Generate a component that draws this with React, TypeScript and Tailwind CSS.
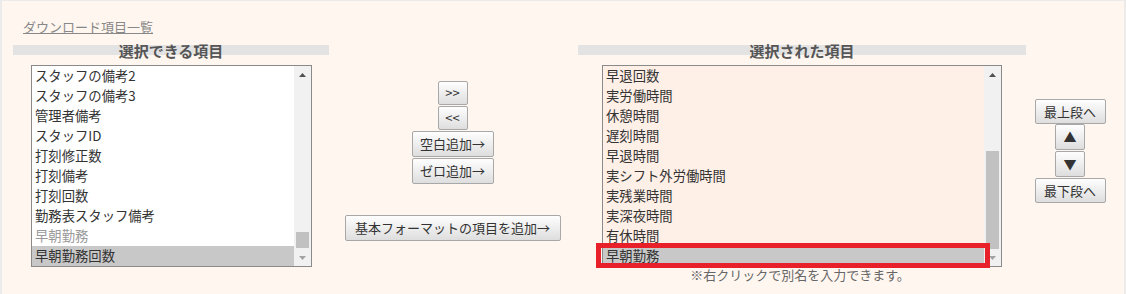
import React from "react";

type Item = { t: string; disabled?: boolean; selected?: boolean };

const leftItems: Item[] = [
  { t: "スタッフの備考2" },
  { t: "スタッフの備考3" },
  { t: "管理者備考" },
  { t: "スタッフID" },
  { t: "打刻修正数" },
  { t: "打刻備考" },
  { t: "打刻回数" },
  { t: "勤務表スタッフ備考" },
  { t: "早朝勤務", disabled: true },
  { t: "早朝勤務回数", selected: true },
];

const rightItems: Item[] = [
  { t: "早退回数" },
  { t: "実労働時間" },
  { t: "休憩時間" },
  { t: "遅刻時間" },
  { t: "早退時間" },
  { t: "実シフト外労働時間" },
  { t: "実残業時間" },
  { t: "実深夜時間" },
  { t: "有休時間" },
  { t: "早朝勤務", selected: true },
];

function Tri({ up, color }: { up: boolean; color: string }) {
  return (
    <svg width="7" height="4" viewBox="0 0 7 4">
      {up ? <polygon points="0,4 7,4 3.5,0" fill={color} /> : <polygon points="0,0 7,0 3.5,4" fill={color} />}
    </svg>
  );
}

function Scrollbar({ big }: { big: boolean }) {
  return (
    <div className="w-[17px] bg-[#f1f1f1] flex flex-col shrink-0">
      <div className="h-[17px] flex items-center justify-center">
        <Tri up color="#505050" />
      </div>
      <div className={"flex-1 flex flex-col justify-end " + (big ? "" : "pb-[1px]")}>
        <div className={"mx-[2px] bg-[#c1c1c1] " + (big ? "h-[98px]" : "h-[16px]")} />
      </div>
      <div className="h-[17px] flex items-center justify-center">
        <Tri up={false} color="#a3a3a3" />
      </div>
    </div>
  );
}

function ListRow({ item }: { item: Item }) {
  return (
    <div
      className={
        "h-[20px] leading-[20px] pl-[3px] whitespace-nowrap " +
        (item.selected ? "bg-[#c8c8c8] text-[#333]" : item.disabled ? "text-[#9a9a9a]" : "text-[#333]")
      }
    >
      {item.t}
    </div>
  );
}

function Btn({ children, cls }: { children: React.ReactNode; cls: string }) {
  return (
    <div
      className={
        "flex items-center justify-center border border-[#a8a8a8] rounded-[2px] bg-gradient-to-b from-[#fefefe] to-[#dedede] text-[#333] text-[13px] whitespace-nowrap " +
        cls
      }
    >
      {children}
    </div>
  );
}

function Header({ label }: { label: string }) {
  return (
    <div className="h-[10px] bg-[#e3e3e3] flex items-center justify-center">
      <span className="text-[15px] leading-[15px] font-bold text-[#555]">{label}</span>
    </div>
  );
}

export default function App() {
  return (
    <div className="w-[1126px] h-[294px] bg-[#ebebeb] pt-[1px] pl-[2px] pr-[2px] font-['Noto_Sans_CJK_JP',sans-serif] overflow-hidden">
      <div className="h-full bg-[#fff6f0]">
        <div className="pt-[12px] pl-[21px] h-[44px]">
          <span className="text-[13px] leading-[19px] text-[#888] underline">ダウンロード項目一覧</span>
        </div>
        <div className="flex pl-[11px]">
          {/* column 1 */}
          <div className="w-[316px] shrink-0">
            <Header label="選択できる項目" />
            <div className="mt-[10px] ml-[18px] w-[281px] h-[202px] border border-[#8a8a8a] bg-white flex text-[13.33px]">
              <div className="flex-1 overflow-hidden">
                {leftItems.map((it, i) => (
                  <ListRow key={i} item={it} />
                ))}
              </div>
              <Scrollbar big={false} />
            </div>
          </div>
          {/* column 2 */}
          <div className="w-[249px] shrink-0 pr-[2px] pt-[36px] flex flex-col items-center">
            <Btn cls="w-[30px] h-[24px] text-[12px]">&gt;&gt;</Btn>
            <Btn cls="w-[30px] h-[24px] mt-[1px] text-[12px]">&lt;&lt;</Btn>
            <Btn cls="w-[82px] h-[26px] mt-[1px]">空白追加→</Btn>
            <Btn cls="w-[82px] h-[26px] mt-[1px]">ゼロ追加→</Btn>
            <Btn cls="w-[216px] h-[26px] mt-[31px]">基本フォーマットの項目を追加→</Btn>
          </div>
          {/* column 3 */}
          <div className="w-[448px] shrink-0">
            <Header label="選択された項目" />
            <div className="mt-[10px] ml-[24px] w-[400px]">
              <div className="relative h-[202px] border border-[#8a8a8a] bg-[#fff0e7] flex text-[13.33px]">
                <div className="flex-1 overflow-hidden">
                  {rightItems.map((it, i) => (
                    <ListRow key={i} item={it} />
                  ))}
                </div>
                <Scrollbar big />
                <div className="absolute left-[-7px] top-[177px] w-[394px] h-[25px] border-[5px] border-[#e8202a]" />
              </div>
              <div className="text-center text-[13px] leading-[16px] text-[#666] pr-[4px]">※右クリックで別名を入力できます。</div>
            </div>
          </div>
          {/* column 4 */}
          <div className="w-[88px] shrink-0 pt-[54px] flex flex-col items-center">
            <Btn cls="w-[71px] h-[25px]">最上段へ</Btn>
            <Btn cls="w-[30px] h-[26px] text-[11px]">▲</Btn>
            <Btn cls="w-[30px] h-[26px] mt-[1px] text-[11px]">▼</Btn>
            <Btn cls="w-[71px] h-[25px] mt-[1px]">最下段へ</Btn>
          </div>
        </div>
      </div>
    </div>
  );
}
